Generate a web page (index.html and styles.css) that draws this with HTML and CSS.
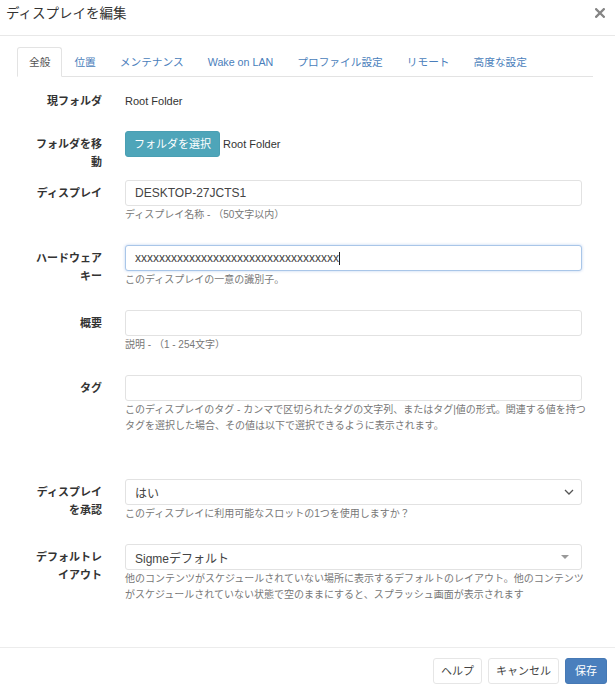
FILE: index.html
```html
<!DOCTYPE html>
<html lang="ja">
<head>
<meta charset="utf-8">
<title>ディスプレイを編集</title>
<link rel="stylesheet" href="styles.css">
</head>
<body>
<div class="modal">
  <div class="modal-header">
    <h4 class="modal-title">ディスプレイを編集</h4>
    <button class="close" type="button" aria-label="閉じる">
      <svg width="10" height="10" viewBox="0 0 10 10"><path d="M1.2 1.2 L8.8 8.8 M8.8 1.2 L1.2 8.8" stroke="#858585" stroke-width="2.3" stroke-linecap="square"/></svg>
    </button>
  </div>
  <div class="modal-body">
    <ul class="nav-tabs">
      <li class="tab active">全般</li>
      <li class="tab">位置</li>
      <li class="tab">メンテナンス</li>
      <li class="tab">Wake on LAN</li>
      <li class="tab">プロファイル設定</li>
      <li class="tab">リモート</li>
      <li class="tab">高度な設定</li>
    </ul>
    <form class="tab-content">
      <div class="form-group group-static">
        <label class="control-label">現フォルダ</label>
        <div class="control"><p class="static-text">Root Folder</p></div>
      </div>
      <div class="form-group group-folder">
        <label class="control-label">フォルダを移動</label>
        <div class="control folder-row">
          <button type="button" class="btn btn-info">フォルダを選択</button>
          <span class="folder-name">Root Folder</span>
        </div>
      </div>
      <div class="form-group">
        <label class="control-label">ディスプレイ</label>
        <div class="control">
          <input class="form-control" type="text" value="DESKTOP-27JCTS1">
          <p class="help">ディスプレイ名称 - （50文字以内）</p>
        </div>
      </div>
      <div class="form-group">
        <label class="control-label">ハードウェアキー</label>
        <div class="control">
          <div class="form-control focused"><span>xxxxxxxxxxxxxxxxxxxxxxxxxxxxxxxxxx</span><span class="caret"></span></div>
          <p class="help">このディスプレイの一意の識別子。</p>
        </div>
      </div>
      <div class="form-group">
        <label class="control-label">概要</label>
        <div class="control">
          <input class="form-control" type="text" value="">
          <p class="help">説明 - （1 - 254文字）</p>
        </div>
      </div>
      <div class="form-group group-tags">
        <label class="control-label">タグ</label>
        <div class="control">
          <input class="form-control" type="text" value="">
          <p class="help">このディスプレイのタグ - カンマで区切られたタグの文字列、またはタグ|値の形式。関連する値を持つタグを選択した場合、その値は以下で選択できるように表示されます。</p>
        </div>
      </div>
      <div class="form-group">
        <label class="control-label">ディスプレイを承認</label>
        <div class="control">
          <div class="form-control select">
            <span>はい</span>
            <svg class="chevron" width="10" height="6" viewBox="0 0 10 6"><path d="M1 1 L5 5 L9 1" fill="none" stroke="#555" stroke-width="1.3"/></svg>
          </div>
          <p class="help">このディスプレイに利用可能なスロットの1つを使用しますか？</p>
        </div>
      </div>
      <div class="form-group">
        <label class="control-label">デフォルトレイアウト</label>
        <div class="control">
          <div class="form-control select select2">
            <span>Sigmeデフォルト</span>
            <svg class="arrow" width="8" height="4" viewBox="0 0 8 4"><path d="M0 0 L8 0 L4 4 Z" fill="#999"/></svg>
          </div>
          <p class="help">他のコンテンツがスケジュールされていない場所に表示するデフォルトのレイアウト。他のコンテンツがスケジュールされていない状態で空のままにすると、スプラッシュ画面が表示されます</p>
        </div>
      </div>
    </form>
  </div>
  <div class="modal-footer">
    <button type="button" class="btn btn-default">ヘルプ</button>
    <button type="button" class="btn btn-default">キャンセル</button>
    <button type="button" class="btn btn-primary">保存</button>
  </div>
</div>
</body>
</html>
```

FILE: styles.css
```css
* { box-sizing: border-box; }

body {
  margin: 0;
  background: #fff;
  color: #333;
  font-family: "Liberation Sans", "Noto Sans CJK JP", sans-serif;
  font-size: 11px;
}

.modal { width: 615px; height: 692px; display: flex; flex-direction: column; }

.modal-header {
  display: flex;
  justify-content: space-between;
  align-items: flex-start;
  padding: 5px 10px 12px 6px;
  border-bottom: 1px solid #e8e8e8;
}

.modal-title {
  margin: 0;
  font-size: 13.5px;
  line-height: 18px;
  font-weight: normal;
  color: #333;
}

.close {
  border: 0;
  background: none;
  padding: 0;
  margin-top: 3px;
  width: 10px;
  height: 10px;
  display: flex;
}

.modal-body {
  flex: 1;
  padding: 11px 22px 0 17px;
}

.nav-tabs {
  list-style: none;
  margin: 0;
  padding: 0;
  display: flex;
  border-bottom: 1px solid #e3e3e3;
}

.tab {
  height: 29px;
  line-height: 28px;
  padding: 0 11px;
  margin-bottom: -1px;
  border: 1px solid transparent;
  border-radius: 3px 3px 0 0;
  color: #4a7ebb;
  font-size: 10.7px;
  white-space: nowrap;
}

.tab.active {
  height: 30px;
  color: #555;
  background: #fff;
  border-color: #e3e3e3 #e3e3e3 #fff;
}

.tab-content { padding: 11px 11px 0 18px; }

.form-group {
  display: grid;
  grid-template-columns: 67px 1fr;
  column-gap: 23px;
  margin-bottom: 22px;
}

.group-static { margin-bottom: 17px; }
.group-folder { margin-bottom: 9px; }
.group-tags { margin-bottom: 45px; }

.control-label {
  text-align: right;
  font-weight: bold;
  padding-top: 4px;
  line-height: 18px;
  color: #333;
}

.static-text {
  margin: 0;
  padding-top: 4px;
  line-height: 18px;
  min-height: 26px;
}

.folder-row { display: flex; align-items: center; align-self: start; gap: 3px; }

.folder-name { line-height: 18px; }

.form-control {
  display: flex;
  align-items: center;
  width: 100%;
  height: 26px;
  margin: 0;
  padding: 0 9px;
  border: 1px solid #e2e2e2;
  border-radius: 3px;
  background: #fff;
  font-family: inherit;
  font-size: 12px;
  color: #444;
}

.form-control.focused {
  border-color: #a9c6e8;
  box-shadow: 0 0 3px rgba(102, 150, 220, 0.45);
}

.caret {
  display: inline-block;
  width: 1px;
  height: 13px;
  background: #222;
}

.select { justify-content: space-between; padding-right: 7px; }
.select2 { padding-right: 12px; }

.help {
  margin: 1px -8px 0 0;
  font-size: 10px;
  line-height: 16px;
  color: #777;
}

.btn {
  height: 26px;
  padding: 0 8px;
  border-radius: 3px;
  border: 1px solid transparent;
  font-family: inherit;
  font-size: 11px;
  line-height: 24px;
  cursor: pointer;
}

.btn-info { background: #4ea5b9; border-color: #4a9fb3; color: #fff; }

.btn-default { background: #fff; border-color: #e6e6e6; color: #444; }

.btn-primary { background: #4a7fbd; border-color: #4679b5; color: #fff; }

.modal-footer {
  display: flex;
  justify-content: flex-end;
  gap: 6px;
  padding: 10px 8px 7px;
  border-top: 1px solid #ececec;
  height: 45px;
}

.modal-footer .btn { height: 26px; padding: 0 7px; }
.modal-footer .btn-primary { padding: 0 9px; }
```
